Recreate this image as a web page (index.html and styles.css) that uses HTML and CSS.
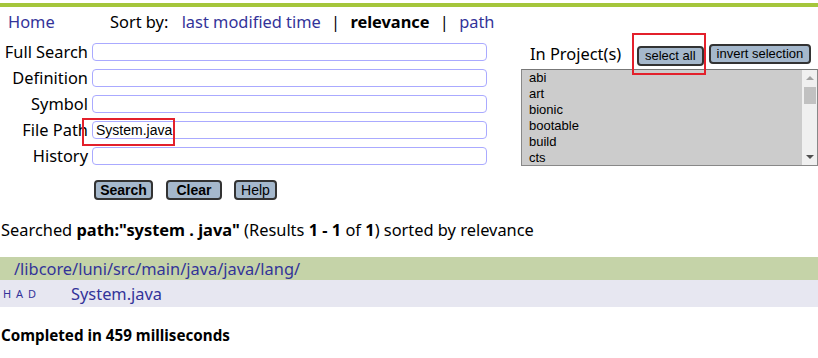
FILE: index.html
```html
<!DOCTYPE html>
<html lang="en">
  <head>
    <meta charset="UTF-8" />
    <title>Search</title>
    <link rel="stylesheet" href="styles.css">
  </head>
  <body>
    <div class="topbar"></div>

    <div class="header">
      <a class="home" href="#">Home</a>
      <div class="sort">
        Sort by:
        <a href="#">last modified time</a>
        <span class="sep">|</span>
        <b>relevance</b>
        <span class="sep">|</span>
        <a href="#">path</a>
      </div>
    </div>

    <form class="search">
      <div class="fields">
        <div class="grid">
          <label for="q">Full Search</label>
          <input type="text" id="q" />
          <label for="defs">Definition</label>
          <input type="text" id="defs" />
          <label for="refs">Symbol</label>
          <input type="text" id="refs" />
          <label for="path">File Path</label>
          <div class="marked">
            <input type="text" id="path" value="System.java" />
            <span class="mark mark-path"></span>
          </div>
          <label for="hist">History</label>
          <input type="text" id="hist" />
        </div>
        <div class="actions">
          <button type="button" class="btn bold btn-search">Search</button>
          <button type="button" class="btn bold btn-clear">Clear</button>
          <button type="button" class="btn btn-help">Help</button>
        </div>
      </div>

      <div class="projects">
        <div class="projects-head">
          <span class="projects-title">In Project(s)</span>
          <span class="marked">
            <button type="button" class="btn small">select all</button>
            <span class="mark mark-all"></span>
          </span>
          <button type="button" class="btn small">invert selection</button>
        </div>
        <div class="listbox">
          <ul class="items">
            <li>abi</li>
            <li>art</li>
            <li>bionic</li>
            <li>bootable</li>
            <li>build</li>
            <li>cts</li>
          </ul>
          <div class="scroll">
            <span class="arrow up"></span>
            <span class="thumb"></span>
            <span class="arrow down"></span>
          </div>
        </div>
      </div>
    </form>

    <p class="summary">
      Searched <b>path:"system . java"</b> (Results <b>1 - 1</b> of <b>1</b>) sorted by relevance
    </p>

    <table class="results">
      <tr class="dir">
        <td colspan="2"><a href="#">/libcore/luni/src/main/java/java/lang/</a></td>
      </tr>
      <tr class="file">
        <td class="had"><a href="#">H</a> <a href="#">A</a> <a href="#">D</a></td>
        <td><a href="#">System.java</a></td>
      </tr>
    </table>

    <p class="done">Completed in 459 milliseconds</p>
  </body>
</html>
```

FILE: styles.css
```css
* {
  box-sizing: border-box;
}

body {
  margin: 0;
  font-family: "Noto Sans", sans-serif;
  font-size: 16.4px;
  color: #000;
  overflow: hidden;
}

a {
  color: #333399;
  text-decoration: none;
}

.topbar {
  height: 4px;
  margin-top: 3px;
  background-color: #a5c63b;
}

.header {
  display: flex;
  padding: 4px 8px 0;
  line-height: 22px;
}

.home {
  width: 102px;
}

.sort .sep {
  margin: 0 6px;
}

.sort a:first-child {
  margin-left: 9px;
}

.search {
  display: flex;
  margin-top: 10px;
}

.fields {
  width: 521px;
  flex-shrink: 0;
}

.grid {
  display: grid;
  grid-template-columns: 88px 395px;
  column-gap: 4px;
  row-gap: 8px;
}

.grid label {
  text-align: right;
  line-height: 18px;
}

.grid input {
  display: block;
  width: 100%;
  height: 18px;
  margin: 0;
  padding: 0 3px;
  border: 1px solid #aaaaff;
  border-radius: 4px;
  font-family: "Liberation Sans", Arial, sans-serif;
  font-size: 14px;
  outline: none;
}

.marked {
  position: relative;
  flex-shrink: 0;
}

.mark {
  position: absolute;
  border: 2px solid #e3202b;
  pointer-events: none;
}

.mark-path {
  left: -10px;
  top: -3px;
  width: 93px;
  height: 28px;
}

.mark-all {
  left: -5px;
  top: -10px;
  width: 74px;
  height: 42px;
}

.actions {
  display: flex;
  margin: 15px 0 0 94px;
  gap: 13px;
}

.btn {
  height: 20px;
  padding: 0 4px;
  border: 2px solid #333;
  border-radius: 4px;
  background-color: #a5b8cc;
  font-family: "Liberation Sans", Arial, sans-serif;
  font-size: 14px;
  color: #000;
  white-space: nowrap;
}

.bold {
  font-weight: bold;
}

.btn-search {
  width: 59px;
}

.btn-clear {
  width: 56px;
}

.btn-help {
  width: 43px;
  margin-left: -1px;
}

.projects {
  flex: 1;
  min-width: 0;
}

.projects-head {
  display: flex;
  align-items: flex-start;
  height: 26px;
  padding-left: 9px;
  line-height: 22px;
}

.projects-title {
  width: 107px;
  flex-shrink: 0;
  white-space: nowrap;
}

.btn.small {
  flex-shrink: 0;
  margin-top: 1px;
  margin-right: 5px;
  padding: 0 6px;
  font-size: 13px;
  line-height: 16px;
}

.listbox {
  display: flex;
  height: 97px;
  border: 1px solid #888;
  border-top-color: #777;
  background-color: #cccccc;
  font-family: "Liberation Sans", Arial, sans-serif;
  font-size: 13px;
}

.items {
  flex: 1;
  list-style: none;
  margin: 0;
  padding: 0 0 0 7px;
  line-height: 16px;
}

.scroll {
  position: relative;
  width: 15px;
  background-color: #f0f0f0;
}

.arrow {
  position: absolute;
  left: 4px;
  width: 0;
  height: 0;
  border-left: 4px solid transparent;
  border-right: 4px solid transparent;
}

.arrow.up {
  top: 6px;
  border-bottom: 4px solid #a3a3a3;
}

.arrow.down {
  bottom: 6px;
  border-top: 4px solid #505050;
}

.thumb {
  position: absolute;
  top: 17px;
  left: 2px;
  width: 12px;
  height: 17px;
  background-color: #c1c1c1;
}

.summary {
  margin: 19px 0 0 1px;
  line-height: 22px;
}

.results {
  width: 100%;
  margin-top: 16px;
  border-collapse: collapse;
}

.dir td {
  height: 23px;
  padding: 0 0 0 14px;
  background-color: #c5d3a8;
}

.file td {
  height: 27px;
  padding: 0;
  background-color: #e7e7f1;
}

.file td.had {
  width: 71px;
  padding-left: 3px;
  font-size: 11px;
  letter-spacing: 1px;
}

.done {
  margin: 18px 0 0 1px;
  font-size: 15.2px;
  font-weight: bold;
}
```
